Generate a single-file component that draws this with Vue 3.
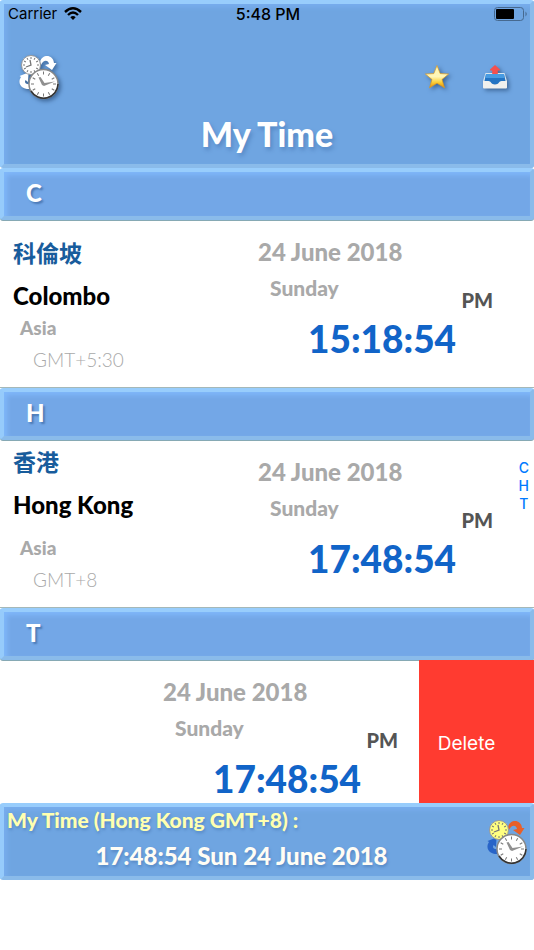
<template>
  <div class="app">
    <svg class="defs" aria-hidden="true">
      <symbol id="clocks" viewBox="0 0 44 50">
        <path class="arrow-top" d="M22 10 C24 2 35 2 36 11 L38.5 11 L34 18 L27 13 L31 12 C30 7 25 8 23 13 Z" />
        <path class="arrow-bottom" d="M13 37 C3 38 -1 31 3 25 L1.5 24 L10.5 20.5 L10 30 L7.5 28 C6 31 8 33 13 32 Z" />
        <circle class="small-face" cx="13" cy="13" r="9.5" />
        <g class="ticks">
          <path v-for="n in 12" :key="n" d="M13 5 V7" :transform="`rotate(${n * 30} 13 13)`" />
        </g>
        <path class="hands" d="M12 8 L13 13 L8 15" />
        <circle class="big-face" cx="25.5" cy="32" r="14.5" />
        <path class="big-shade" d="M40 32 A14.5 14.5 0 0 1 13 39" />
        <g class="ticks">
          <path v-for="n in 12" :key="n" d="M25.5 19.5 V22.5" :transform="`rotate(${n * 30} 25.5 32)`" />
        </g>
        <path class="hour" d="M20.5 25.5 L22.5 25 L26.5 31 L37 29.5 L26 34 L24 33 Z" />
      </symbol>
    </svg>

    <header class="panel header">
      <div class="status">
        <span class="carrier">
          Carrier
          <svg width="18" height="14" viewBox="0 0 18 14">
            <path d="M1 5 Q9 -2.4 17 5" />
            <path d="M4 8 Q9 3.2 14 8" />
            <path class="dot" d="M6.3 10.2 Q9 8 11.7 10.2 L9 13 Z" />
          </svg>
        </span>
        <span class="clock">5:48 PM</span>
        <svg class="battery" width="34" height="16" viewBox="0 0 34 16">
          <rect class="shell" x="0.5" y="1.5" width="29" height="13" rx="3" />
          <rect x="2" y="3" width="18" height="10" rx="1" />
          <path class="tip" d="M31.5 5.5 Q34 8 31.5 10.5 Z" />
        </svg>
      </div>
      <div class="toolbar">
        <button class="tool" aria-label="Switch clocks">
          <svg class="clocks plain" width="44" height="50"><use href="#clocks" /></svg>
        </button>
        <div class="tools">
          <button class="tool" aria-label="Favourites">
            <svg width="26" height="26" viewBox="0 0 26 26">
              <defs>
                <linearGradient id="gold" x1="0" y1="0" x2="0" y2="1">
                  <stop offset="0" stop-color="#fff6b0" />
                  <stop offset="0.5" stop-color="#fff6b8" />
                  <stop offset="0.75" stop-color="#fbd038" />
                  <stop offset="1" stop-color="#e58a08" />
                </linearGradient>
              </defs>
              <path fill="url(#gold)" stroke="#dc9a20" stroke-width="0.7" d="M13 1.5 L16.2 9.6 L24.6 10 L18 15.5 L20.5 23.8 L13 19.2 L5.5 23.8 L8 15.5 L1.4 10 L9.8 9.6 Z" />
            </svg>
          </button>
          <button class="tool" aria-label="Export">
            <svg width="26" height="26" viewBox="0 0 26 26">
              <path fill="#d9e6ef" d="M3.5 9 H22.5 L25 17 H1 Z" />
              <path fill="#2474c3" d="M4 10 H22 L23.5 17 L17 20.5 H9 L2.5 17 Z" />
              <path fill="#479be2" d="M4 10 H22 L22.5 14 H3.5 Z" />
              <path fill="#f0f0ee" d="M1 17 H6.5 C9 17 9 20.5 13 20.5 C17 20.5 17 17 19.5 17 H25 V23.5 Q25 24.5 24 24.5 H2 Q1 24.5 1 23.5 Z" />
              <path fill="#f4504e" d="M13 1 L18 5.5 V6.5 H15.8 V10 H10.2 V6.5 H8 V5.5 Z" />
            </svg>
          </button>
        </div>
      </div>
      <h1>My Time</h1>
    </header>

    <main class="list">
      <section v-for="city in cities" :key="city.letter">
        <h2 class="panel letter">{{ city.letter }}</h2>
        <div class="row" :class="{ swiped: city.swiped }">
          <div class="place">
            <template v-if="!city.swiped">
              <div class="names" :class="{ raised: city.raised }">
                <p class="local" lang="zh-Hant">{{ city.local }}</p>
                <p class="name">{{ city.name }}</p>
              </div>
              <p class="region">{{ city.region }}</p>
              <p class="zone">{{ city.zone }}</p>
            </template>
          </div>
          <div class="when">
            <p class="date">24 June 2018</p>
            <div class="day">
              <span>Sunday</span>
              <span class="half">PM</span>
            </div>
            <p class="time">{{ city.time }}</p>
          </div>
          <button v-if="city.swiped" class="delete">Delete</button>
        </div>
      </section>
      <nav class="index">
        <a v-for="city in cities" :key="city.letter" href="#">{{ city.letter }}</a>
      </nav>
    </main>

    <footer class="panel footer">
      <div class="mine">
        <p class="label">My Time (Hong Kong GMT+8) :</p>
        <p class="now">17:48:54 Sun 24 June 2018</p>
      </div>
      <button class="tool" aria-label="Change my time">
        <svg class="clocks coloured" width="44" height="50"><use href="#clocks" /></svg>
      </button>
    </footer>
  </div>
</template>

<script setup>
import { ref } from "vue"

const cities = ref([
  {
    letter: "C",
    local: "科倫坡",
    name: "Colombo",
    region: "Asia",
    zone: "GMT+5:30",
    time: "15:18:54",
  },
  {
    letter: "H",
    local: "香港",
    name: "Hong Kong",
    region: "Asia",
    zone: "GMT+8",
    time: "17:48:54",
    raised: true,
  },
  {
    letter: "T",
    time: "17:48:54",
    swiped: true,
  },
])
</script>

<style>
body {
  margin: 0;
  background: #fff;
}
</style>

<style scoped>
.app {
  font-family: Lato, "Noto Sans CJK TC", sans-serif;
  font-weight: 900;
}

.defs {
  display: block;
  width: 0;
  height: 0;
}

h1,
h2,
p {
  margin: 0;
}

button {
  border: 0;
  padding: 0;
  background: none;
  font: inherit;
}

.panel {
  box-sizing: border-box;
  border: 4px solid;
  border-color: #98cdfc #8abbea #8abbea #96cbfb;
  border-radius: 3px;
  background: #6fa5e1;
  box-shadow: inset 3px 3px 5px #78adee;
  color: #fff;
}

.header {
  height: 168px;
}

.status {
  display: grid;
  grid-template-columns: 1fr auto 1fr;
  align-items: center;
  height: 20px;
  padding: 0 2px 0 4px;
  color: #000;
  font: 400 15px/20px Inter, sans-serif;
}

.carrier {
  display: flex;
  align-items: center;
  gap: 7px;
}

.carrier path {
  fill: none;
  stroke: #000;
  stroke-width: 2.4;
}

.carrier .dot {
  fill: #000;
  stroke: none;
}

.clock {
  font-size: 16px;
  font-weight: 500;
}

.battery {
  justify-self: end;
}

.battery .shell {
  fill: none;
  stroke: #46698f;
}

.battery .tip {
  fill: #46698f;
}

.toolbar {
  display: flex;
  justify-content: space-between;
  align-items: center;
  height: 50px;
  margin-top: 28px;
  padding: 0 22px 0 14px;
}

.tools {
  display: flex;
  gap: 32px;
}

.tool svg {
  display: block;
  filter: drop-shadow(2px 2px 2px #3c6596);
}

.clocks {
  --small: #fff;
  --top: #fff;
  --bottom: #fff;
}

.coloured {
  --small: #ffff80;
  --top: #e8602a;
  --bottom: #2864c8;
}

.tool .coloured {
  filter: none;
}

.arrow-top {
  fill: var(--top);
}

.arrow-bottom {
  fill: var(--bottom);
}

.small-face {
  fill: var(--small);
  stroke: #999;
}

.big-face {
  fill: #fff;
  stroke: #888;
  stroke-width: 1.5;
}

.big-shade {
  fill: none;
  stroke: #333;
  stroke-width: 1.5;
}

.ticks {
  stroke: #777;
}

.hands {
  fill: none;
  stroke: #777;
  stroke-width: 1.3;
}

.hour {
  fill: #909090;
}

h1 {
  margin-top: 11px;
  font-size: 34px;
  font-weight: 900;
  line-height: 42px;
  text-align: center;
  text-shadow: 2px 3px 4px #5688c4;
}

.list {
  position: relative;
}

.letter {
  height: 52px;
  padding-left: 22px;
  background: #73a7e7;
  box-shadow: inset 3px 3px 5px #80b8fb, 0 1px 0 #86a9b4;
  font-size: 24px;
  font-weight: 900;
  line-height: 42px;
  text-shadow: 2px 2px 2px #4b79b5;
}

.row {
  display: flex;
  box-sizing: border-box;
  height: 168px;
  padding-right: 20px;
  border-bottom: 1px solid #a5b8b8;
}

.swiped {
  height: 143px;
  padding-right: 0;
  border-bottom: 0;
  overflow: hidden;
}

.place {
  flex: 1;
  padding: 19px 0 0 13px;
  white-space: nowrap;
}

.raised {
  margin: -11px 0 17px;
}

.local {
  color: #185c9c;
  font-size: 23px;
  font-weight: 700;
  line-height: 28px;
}

.name {
  margin-top: 15px;
  color: #000;
  font-size: 24px;
  line-height: 28px;
}

.region {
  margin: 6px 0 0 7px;
  color: #a9a9a9;
  font-size: 19px;
  line-height: 24px;
}

.zone {
  margin: 8px 0 0 20px;
  color: #a9a9a9;
  font-size: 19px;
  font-weight: 300;
  line-height: 24px;
}

.when {
  flex: 0 0 256px;
  box-sizing: border-box;
  padding-top: 17px;
}

.date {
  color: #a9a9a9;
  font-size: 24px;
  line-height: 30px;
}

.day {
  display: flex;
  justify-content: space-between;
  padding: 7px 21px 5px 12px;
  color: #a9a9a9;
  font-size: 21px;
  line-height: 28px;
}

.half {
  padding-top: 12px;
  color: #555;
  font-size: 20px;
}

.time {
  padding-left: 50px;
  color: #1164c8;
  font-size: 37px;
  line-height: 40px;
}

.delete {
  flex: 0 0 115px;
  height: 168px;
  padding-right: 20px;
  background: #ff3b30;
  color: #fff;
  font: 400 19px/24px Inter, sans-serif;
}

.index {
  position: absolute;
  top: 50%;
  right: 5px;
  display: flex;
  flex-direction: column;
  transform: translateY(-50%);
  font: 500 14px/18px Inter, sans-serif;
  text-align: center;
}

.index a {
  color: #007aff;
  text-decoration: none;
}

.footer {
  display: flex;
  justify-content: space-between;
  align-items: center;
  height: 77px;
  padding-left: 3px;
}

.mine {
  flex: 1;
  text-shadow: 1px 2px 3px #5688c4;
}

.label {
  color: #ffffb0;
  font-size: 21px;
  line-height: 28px;
}

.now {
  padding: 8px 10px 8px 0;
  color: #fffdf5;
  font-size: 24px;
  line-height: 28px;
  text-align: center;
}
</style>
